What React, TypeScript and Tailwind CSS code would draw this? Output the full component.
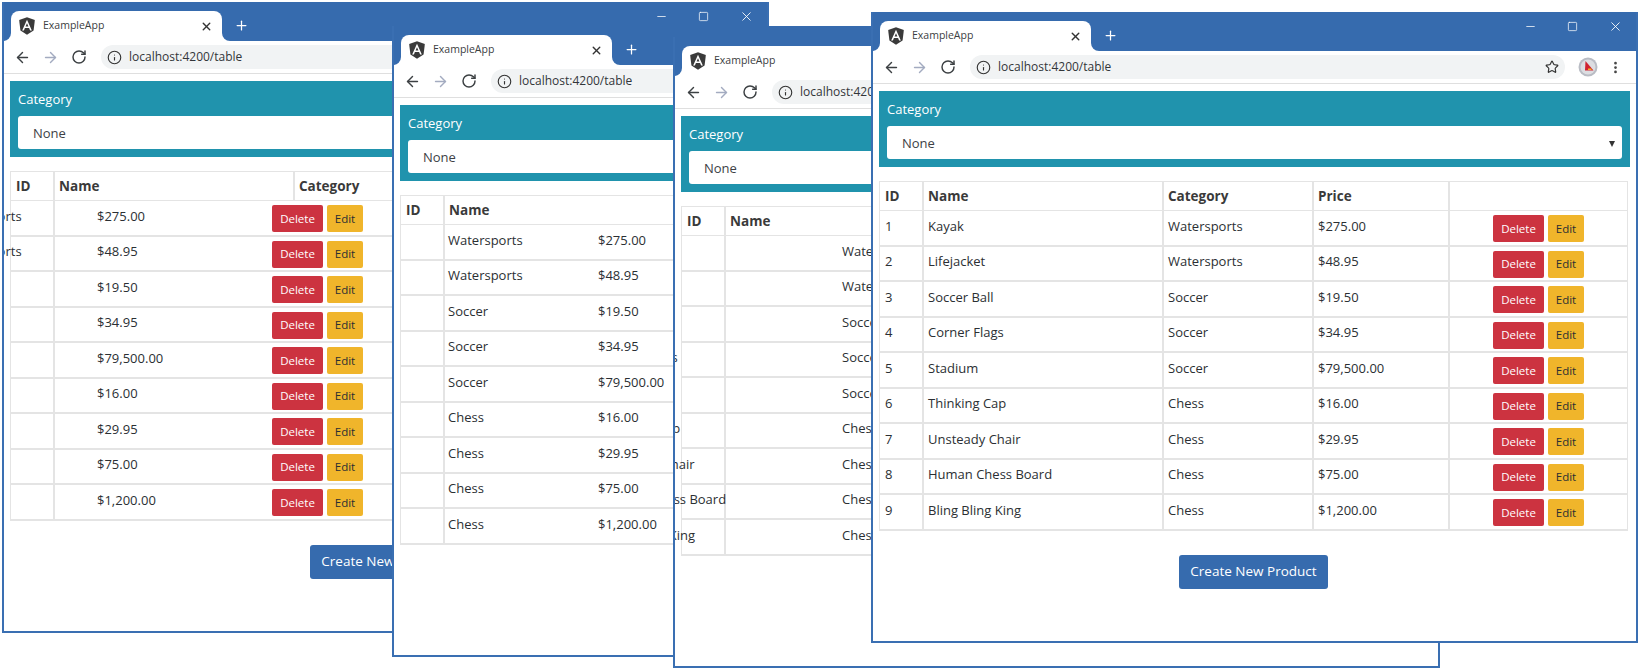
import { ArrowLeft, ArrowRight, Info, Minus, MoreVertical, Plus, RotateCw, Square, Star, X } from 'lucide-react';

interface Product {
  id: number;
  name: string;
  category: string;
  price: string;
}

interface WindowConfig {
  position: string;
  // how far the table body has been pushed left of its heading
  shift: string;
  whole?: boolean;
}

const products: Product[] = [
  { id: 1, name: 'Kayak', category: 'Watersports', price: '$275.00' },
  { id: 2, name: 'Lifejacket', category: 'Watersports', price: '$48.95' },
  { id: 3, name: 'Soccer Ball', category: 'Soccer', price: '$19.50' },
  { id: 4, name: 'Corner Flags', category: 'Soccer', price: '$34.95' },
  { id: 5, name: 'Stadium', category: 'Soccer', price: '$79,500.00' },
  { id: 6, name: 'Thinking Cap', category: 'Chess', price: '$16.00' },
  { id: 7, name: 'Unsteady Chair', category: 'Chess', price: '$29.95' },
  { id: 8, name: 'Human Chess Board', category: 'Chess', price: '$75.00' },
  { id: 9, name: 'Bling Bling King', category: 'Chess', price: '$1,200.00' },
];

const windows: WindowConfig[] = [
  { position: 'left-[2px] top-[2px]', shift: '-ml-[352px]' },
  { position: 'left-[392px] top-[26px]', shift: '-ml-[241px]' },
  { position: 'left-[673px] top-[37px]', shift: '-ml-[128px]' },
  { position: 'left-[871px] top-[12px]', shift: 'ml-0', whole: true },
];

const AngularLogo = () => (
  <svg viewBox="0 0 24 24" className="h-[20px] w-[20px] shrink-0">
    <path d="M12 1.5 2.6 4.8l1.5 12.5L12 22.5l7.9-5.2 1.5-12.5z" fill="#3a3a3a" />
    <path
      fillRule="evenodd"
      d="M12 4.6 6.2 17.3h2.1l1.2-2.9h5l1.2 2.9h2.1zm1.7 8.1h-3.4L12 8.7z"
      fill="#fff"
    />
  </svg>
);

const ExtensionIcon = () => (
  <svg viewBox="0 0 20 20" className="h-5 w-5">
    <circle cx="10" cy="10" r="9.5" fill="#b9bcc4" />
    <circle cx="10" cy="10" r="7.5" fill="#dcdde1" />
    <path d="M7.5 4 15.5 13.5H7z" fill="#d0212f" />
    <path d="M10 11.5h3.5V13H10z" fill="#f0b52b" />
  </svg>
);

const Tab = () => (
  <div className="relative ml-[7px] flex h-[30px] w-[211px] items-center rounded-t-lg bg-white pl-[6px] pr-[9px]">
    <span className="absolute -left-2 bottom-0 h-2 w-2 bg-white">
      <span className="block h-full w-full rounded-br-lg bg-[#366bae]" />
    </span>
    <span className="absolute -right-2 bottom-0 h-2 w-2 bg-white">
      <span className="block h-full w-full rounded-bl-lg bg-[#366bae]" />
    </span>
    <AngularLogo />
    <span className="ml-[6px] flex-1 text-[10.5px] text-[#3c4043]">ExampleApp</span>
    <X size={13} strokeWidth={2.6} className="text-[#333]" />
  </div>
);

const TitleBar = () => (
  <div className="flex h-[39px] items-end bg-[#366bae] pr-[13px]">
    <Tab />
    <Plus size={15} strokeWidth={2} className="mb-[8px] ml-[12px] text-white" />
    <div className="mb-[17px] ml-auto flex items-center gap-[30px] self-end text-white">
      <Minus size={13} strokeWidth={1.4} />
      <Square size={11} strokeWidth={1.6} />
      <X size={15} strokeWidth={1.4} />
    </div>
  </div>
);

const Toolbar = () => (
  <div className="flex h-[33px] items-center border-b border-[#dfdfdf] bg-white pl-[10px] pr-[13px]">
    <ArrowLeft size={17} strokeWidth={2} className="text-[#3c4043]" />
    <ArrowRight size={17} strokeWidth={2} className="ml-[11px] text-[#a3abc0]" />
    <RotateCw size={16} strokeWidth={2.2} className="ml-[12px] text-[#3c4043]" />
    <div className="ml-[14px] flex h-[24px] w-[595px] items-center rounded-full bg-[#f1f3f4] pl-[6px] pr-[6px]">
      <Info size={15} strokeWidth={1.8} className="text-[#333]" />
      <span className="ml-[7px] flex-1 text-[12px] text-[#33363a]">localhost:4200/table</span>
      <Star size={14} strokeWidth={2} className="text-[#333]" />
    </div>
    <div className="ml-[13px]">
      <ExtensionIcon />
    </div>
    <MoreVertical size={15} strokeWidth={2.4} className="ml-auto text-[#444]" />
  </div>
);

const CategoryPanel = () => (
  <div className="h-[76px] bg-[#2093ad] px-[8px] pt-[6px]">
    <div className="h-[29px] text-[13px] leading-[24px] text-white">Category</div>
    <div className="flex h-[33px] items-center justify-between rounded-[3px] bg-white pl-[15px] pr-[7px] pt-[3px] text-[13px] text-[#3d4145]">
      None
      <span className="border-x-[3.5px] border-t-[6px] border-x-transparent border-t-[#333]" />
    </div>
  </div>
);

const ProductTable = ({ shift, whole }: { shift: string; whole?: boolean }) => (
  <div className="mt-[14px] w-[749px] text-[13px] text-[#2b2f33]">
    <div className="flex h-[30px] items-center border border-[#e4e4e4] text-[13.5px] font-bold text-[#3a3a3a]">
      <div className="flex h-full w-[44px] shrink-0 items-center border-r-2 border-[#e4e4e4] pl-[5px]">ID</div>
      <div className="flex h-full w-[240px] shrink-0 items-center border-r-2 border-[#e4e4e4] pl-[4px]">Name</div>
      <div className="flex h-full w-[150px] shrink-0 items-center border-r-2 border-[#e4e4e4] pl-[4px]">Category</div>
      <div className="flex h-full w-[136px] shrink-0 items-center border-r-2 border-[#e4e4e4] pl-[4px]">Price</div>
    </div>
    {products.map(p => (
      <div key={p.id} className="flex h-[35.5px] border-x border-b-2 border-[#e4e4e4]">
        <div className="w-[44px] shrink-0 border-r-2 border-[#e4e4e4] pl-[5px] pt-[5.5px]">{whole ? p.id : ''}</div>
        <div className={`flex shrink-0 ${shift}`}>
          <div className={`w-[240px] shrink-0 pl-[4px] pt-[5.5px] ${whole ? 'border-r-2 border-[#e4e4e4]' : ''}`}>{p.name}</div>
          <div className={`w-[150px] shrink-0 pl-[4px] pt-[5.5px] ${whole ? 'border-r-2 border-[#e4e4e4]' : ''}`}>{p.category}</div>
          <div className={`w-[136px] shrink-0 pl-[4px] pt-[5.5px] ${whole ? 'border-r-2 border-[#e4e4e4]' : ''}`}>{p.price}</div>
          <div className="flex w-[177px] shrink-0 justify-center gap-[4px] pt-[4px]">
            <button className="h-[27px] w-[51px] rounded-[2px] bg-[#cc3340] text-[11.5px] text-white">Delete</button>
            <button className="h-[27px] w-[36px] rounded-[2px] bg-[#f0b52b] text-[11.5px] text-[#2b2f33]">Edit</button>
          </div>
        </div>
      </div>
    ))}
  </div>
);

const BrowserWindow = ({ position, shift, whole }: WindowConfig) => (
  <div className={`absolute h-[631px] w-[767px] overflow-hidden border-x-2 border-b-2 border-[#3a6fb2] bg-white ${position}`}>
    <TitleBar />
    <Toolbar />
    <div className="px-[6px] pt-[7px]">
      <CategoryPanel />
      <ProductTable shift={shift} whole={whole} />
      <div className="mt-[24px] flex justify-center pr-[2px]">
        <button className="h-[34px] w-[149px] rounded-[3px] bg-[#366bae] text-[13.5px] text-white">Create New Product</button>
      </div>
    </div>
  </div>
);

export default function App() {
  return (
    <div className="relative h-[671px] w-[1639px] overflow-hidden bg-white font-['Open_Sans',sans-serif]">
      {windows.map(w => (
        <BrowserWindow key={w.position} {...w} />
      ))}
    </div>
  );
}
